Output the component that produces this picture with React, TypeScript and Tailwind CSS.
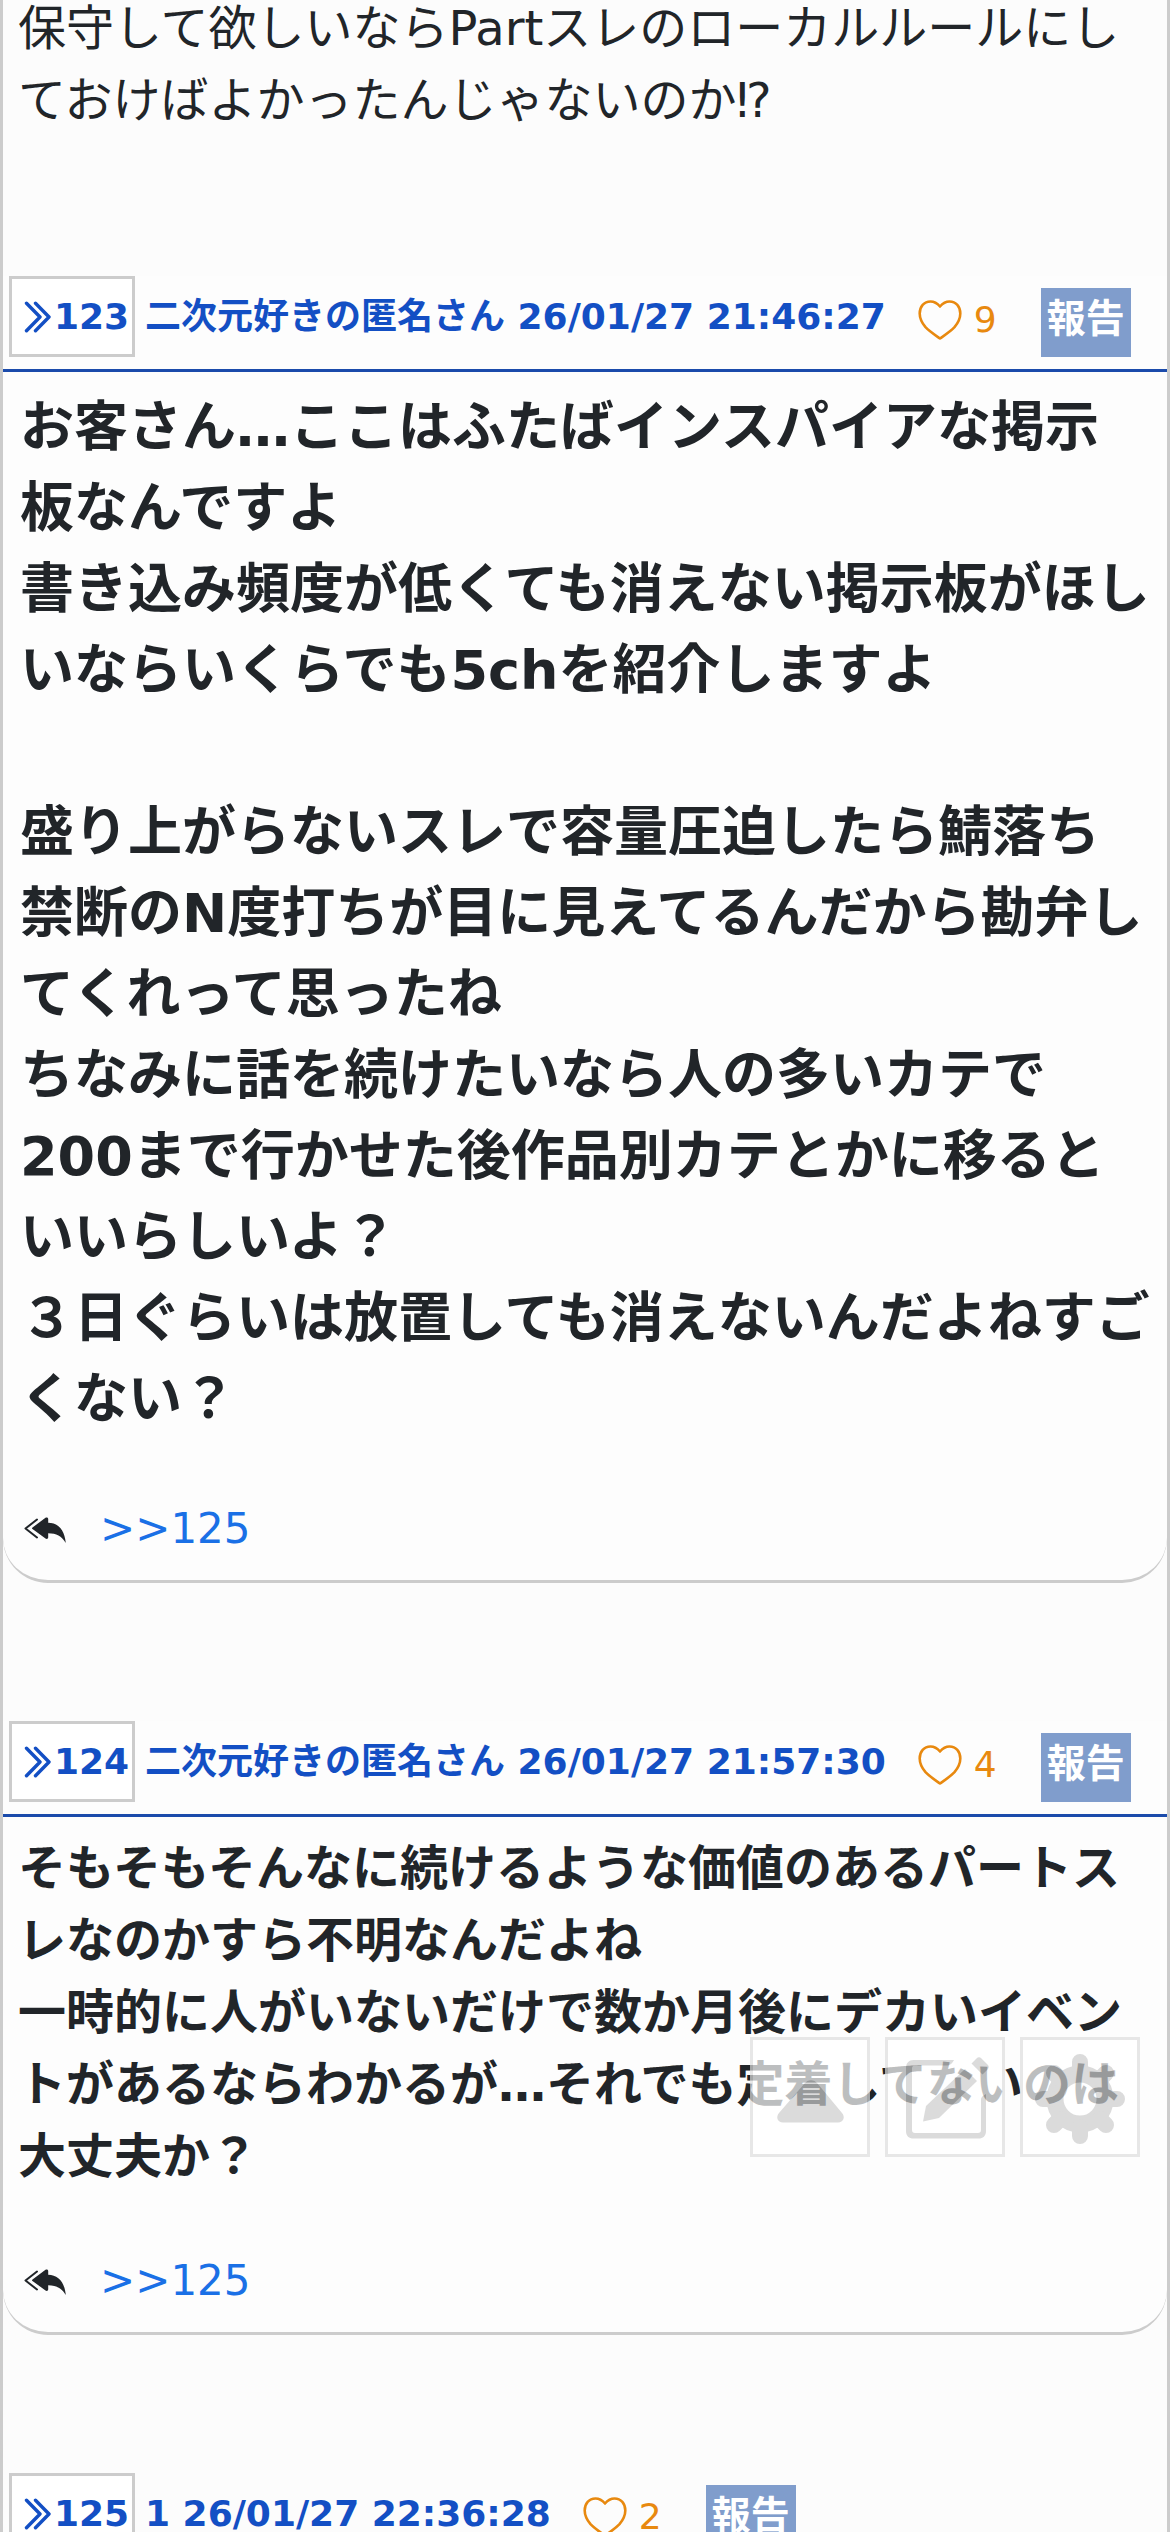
const posts = [
  {
    id: 123,
    name: '二次元好きの匿名さん',
    date: '26/01/27 21:46:27',
    likes: 9,
    large: true,
    lines: [
      'お客さん…ここはふたばインスパイアな掲示',
      '板なんですよ',
      '書き込み頻度が低くても消えない掲示板がほしいならいくらでも5chを紹介しますよ',
      '',
      '盛り上がらないスレで容量圧迫したら鯖落ち',
      '禁断のN度打ちが目に見えてるんだから勘弁してくれって思ったね',
      'ちなみに話を続けたいなら人の多いカテで200まで行かせた後作品別カテとかに移るといいらしいよ？',
      '３日ぐらいは放置しても消えないんだよねすごくない？',
    ],
    reply: 125,
  },
  {
    id: 124,
    name: '二次元好きの匿名さん',
    date: '26/01/27 21:57:30',
    likes: 4,
    large: false,
    lines: [
      'そもそもそんなに続けるような価値のあるパートスレなのかすら不明なんだよね',
      '一時的に人がいないだけで数か月後にデカいイベントがあるならわかるが…それでも定着してないのは大丈夫か？',
    ],
    reply: 125,
  },
]

function ChevronsIcon() {
  return (
    <svg className="h-8 w-7 shrink-0" viewBox="0 0 28 32" fill="none" stroke="currentColor" strokeWidth="3.4" strokeLinecap="round" strokeLinejoin="round" aria-hidden="true">
      <path d="M2.5 2.2 16 16 2.5 29.8M11.5 2.2 25 16 11.5 29.8" />
    </svg>
  )
}

function HeartIcon() {
  return (
    <svg className="h-10 w-11" viewBox="0 0 44 40" fill="none" stroke="currentColor" strokeWidth="2.6" strokeLinejoin="round" aria-hidden="true">
      <path d="M22 6.500C19 3 16.500 1.500 12.500 1.500 6 1.500 1.700 6.500 1.700 13.500c0 5 2.300 9.500 5.800 13.700C11.500 31.500 17 35 22 38.500c5-3.500 10.500-7 14.500-11.300 3.500-4.200 5.800-8.700 5.800-13.700 0-7-4.300-12-10.800-12-4 0-6.500 1.500-9.500 5z" />
    </svg>
  )
}

function ReplyAllIcon() {
  return (
    <svg className="mt-1 h-7 w-[42px] shrink-0" viewBox="0 0 42 28" aria-hidden="true">
      <path d="M13 2.500 1.500 11.500 13 20.500" fill="none" stroke="currentColor" strokeWidth="2" strokeLinecap="round" strokeLinejoin="round" />
      <path d="M8.500 10.500 21.500.8c1.300-.9 2.700-.2 2.700 1.300v3.700C34 6 40.500 12.500 41.800 26 37.500 19 32.500 16.500 24.200 16.300v3.900c0 1.500-1.400 2.200-2.700 1.300L8.500 12c-.7-.5-.7-1 0-1.500z" fill="currentColor" />
    </svg>
  )
}

function PostHeader({ id, name, date, likes }: { id: number; name: string; date: string; likes: number }) {
  return (
    <header className="flex items-start border-b-[3px] border-[#1b4bab] pb-3 pl-1.5 text-[36px] leading-[54px]">
      <a
        href={`#res${id}`}
        className="flex h-[81px] w-[126px] shrink-0 items-center gap-0.5 border-[3px] border-[#ccc] bg-white pl-3 font-bold text-[#134fc4]"
      >
        <ChevronsIcon />
        {id}
      </a>
      <p className="ml-2.5 h-[81px] shrink-0 pt-[14px] font-bold whitespace-nowrap text-[#134fc4]">
        {name} {date}
      </p>
      <button type="button" aria-label={`いいね ${likes}`} className="ml-8 flex h-[81px] w-[123px] shrink-0 items-center gap-3 pt-1.5 text-[#e8890f]">
        <HeartIcon />
        <span>{likes}</span>
      </button>
      <button type="button" className="mt-3 h-[69px] w-[90px] shrink-0 bg-[#809dcc] pb-2 text-[39px] leading-[60px] font-bold text-white">
        報告
      </button>
    </header>
  )
}

function ToolButtons() {
  return (
    <nav className="fixed right-[30px] bottom-[375px] flex gap-[15px] text-[#ccc] opacity-70" aria-label="ツール">
      <button type="button" aria-label="上へ" className="flex size-[120px] items-center justify-center border-[3px] border-[#ddd] bg-white">
        <svg className="size-[114px]" viewBox="0 0 114 114" fill="currentColor" aria-hidden="true">
          <path d="M51.500 43.500c3.300-4.500 9.700-4.500 13 0L89 73c3.500 4 1.500 9.500-4 9.500H30c-5.500 0-7.500-5.500-4-9.500z" />
        </svg>
      </button>
      <button type="button" aria-label="書き込む" className="flex size-[120px] items-center justify-center border-[3px] border-[#ddd] bg-white">
        <svg className="size-[114px]" viewBox="0 0 114 114" aria-hidden="true">
          <path d="M66 20c-1.500 3-3.500 5-6 5.500H27a3 3 0 0 0-3 3V90a3 3 0 0 0 3 3h63a3 3 0 0 0 3-3V59c.5-2 2-3.500 5-5v37c0 5-3 7.500-7.500 7.500h-65C21 98.500 18 96 18 91V28c0-5 3-8 7.500-8z" fill="currentColor" />
          <path d="M35 81.500 38 66 77 29l12 12-38 37z" fill="currentColor" />
          <path d="m83.500 23.500 5-5c1.700-1.700 3.300-1.700 5 0l6 6c1.700 1.700 1.700 3.300 0 5l-5 5z" fill="currentColor" />
        </svg>
      </button>
      <button type="button" aria-label="設定" className="flex size-[120px] items-center justify-center border-[3px] border-[#ddd] bg-white">
        <svg className="size-[114px]" viewBox="-57 -59 114 114" fill="none" stroke="currentColor" aria-hidden="true">
          <circle r="25" strokeWidth="17" />
          <path strokeWidth="16" strokeLinecap="round" d="M0-28V-37M0 28V37M-28 0H-37M28 0H37M-20-20-26-26M20-20 26-26M-20 20-26 26M20 20 26 26" />
        </svg>
      </button>
    </nav>
  )
}

export default function App() {
  return (
    <main
      lang="ja"
      className="h-screen overflow-hidden border-x-[3px] border-[#ccc] bg-[#fcfcfc] font-['DejaVu_Sans','Noto_Sans_CJK_JP',sans-serif] text-[#212529]"
    >
      <article className="-mt-2 mb-[140px] px-[15px] text-[48px] leading-[72px]">
        <p>保守して欲しいならPartスレのローカルルールにしておけばよかったんじゃないのか⁉</p>
      </article>

      {posts.map((post) => (
        <article key={post.id} id={`res${post.id}`} className="mb-[138px] rounded-b-[45px] border-b-[3px] border-[#ccc] bg-[#fdfdfd]">
          <PostHeader {...post} />
          <div className={`pt-[15px] font-bold ${post.large ? 'pr-3 pl-[17px] text-[54px] leading-[81px]' : 'px-[15px] text-[48px] leading-[72px]'}`}>
            {post.lines.map((line, i) => (
              <p key={i}>{line || <br />}</p>
            ))}
          </div>
          <div className="mt-[57px] flex items-center gap-[34px] pb-5 pl-[21px] text-[42px] leading-[63px]">
            <ReplyAllIcon />
            <a href={`#res${post.reply}`} className="text-[#1a70e6]">
              &gt;&gt;{post.reply}
            </a>
          </div>
        </article>
      ))}

      <article id="res125">
        <PostHeader id={125} name="1" date="26/01/27 22:36:28" likes={2} />
      </article>

      <ToolButtons />
    </main>
  )
}
